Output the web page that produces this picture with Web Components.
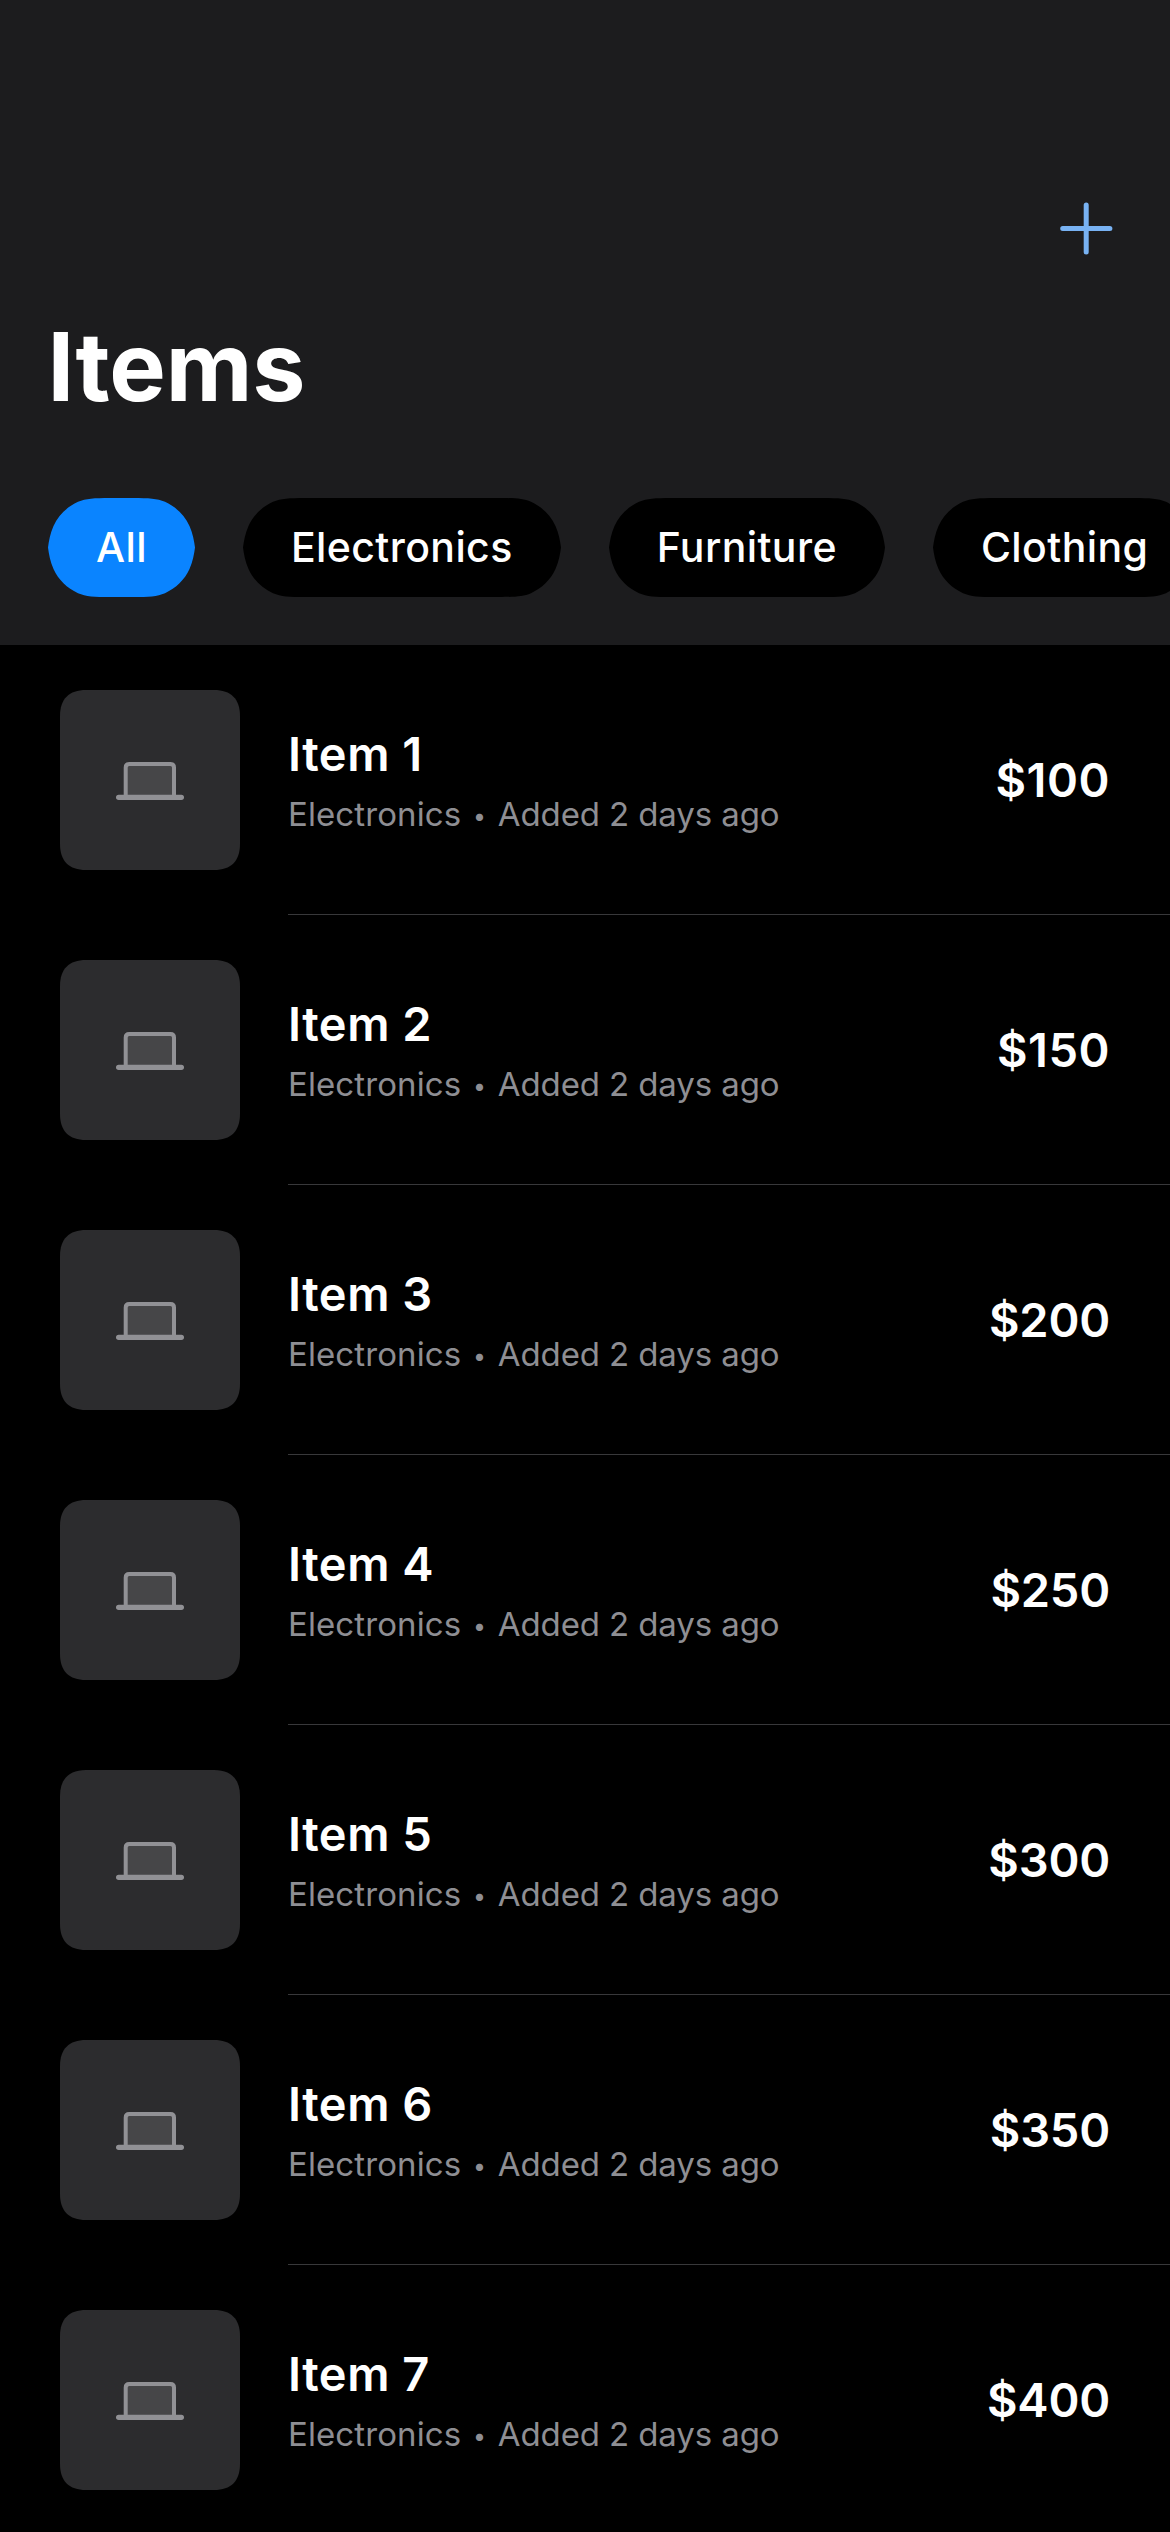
<!DOCTYPE html>
<html lang="en">
<head>
<meta charset="utf-8">
<title>Items</title>
<style>
html, body { margin: 0; background: #000; overflow: hidden; }
body { width: 1170px; height: 2532px; font-family: Inter, "Liberation Sans", sans-serif; color: #fff; }
</style>
</head>
<body>
<items-screen></items-screen>

<template id="screen">
<style>
:host { display: flex; flex-direction: column; width: 1170px; height: 2532px; overflow: hidden; background: #000; }
</style>
<nav-header heading="Items">
  <filter-chip selected>All</filter-chip>
  <filter-chip>Electronics</filter-chip>
  <filter-chip>Furniture</filter-chip>
  <filter-chip>Clothing</filter-chip>
</nav-header>
<main></main>
</template>

<template id="header">
<style>
:host { display: flex; flex-direction: column; box-sizing: border-box; height: 645px; padding: 202px 0 48px; background: #1c1c1e; flex: none; }
.bar { display: flex; justify-content: flex-end; padding-right: 57px; height: 53px; flex: none; }
svg { display: block; }
h1 { margin: 54px 0 0 47.5px; height: 116px; font-size: 95px; line-height: 116px; font-weight: 700; letter-spacing: -0.1px; }
.chips { display: flex; gap: 48px; padding-left: 48px; margin-top: auto; overflow: hidden; }
</style>
<div class="bar">
  <svg width="53" height="53" viewBox="0 0 53 53" fill="none" stroke="#78b2f3" stroke-width="5" stroke-linecap="round"><path d="M26.2 3v47M2.7 26.5h47.2"/></svg>
</div>
<h1></h1>
<div class="chips"><slot></slot></div>
</template>

<template id="chip">
<style>
:host { display: grid; flex: none; height: 99px; color: #000; font-size: 41px; font-weight: 500; letter-spacing: .4px; }
:host([selected]) { color: #0a84ff; }
.shape, .label { grid-area: 1 / 1; }
.shape { display: flex; min-width: 0; }
.shape svg { display: block; flex: none; fill: currentColor; }
.shape i { flex: 1; margin: 0 -1px; background: currentColor; }
.label { color: #fff; padding: 0 48px; line-height: 99px; white-space: nowrap; }
</style>
<div class="shape">
  <svg width="62" height="99" viewBox="0 0 62 99"><path d="M0 49.5C.8 43 2.300 35 5.500 28C10.500 17 19 9 30 3.800C38 .5 46 0 62 0V99C46 99 38 98.500 30 95.200C19 90 10.500 82 5.500 71C2.300 64 .8 56 0 49.500Z"/></svg>
  <i></i>
  <svg width="62" height="99" viewBox="0 0 62 99"><path transform="matrix(-1 0 0 1 62 0)" d="M0 49.5C.8 43 2.300 35 5.500 28C10.500 17 19 9 30 3.800C38 .5 46 0 62 0V99C46 99 38 98.500 30 95.200C19 90 10.500 82 5.500 71C2.300 64 .8 56 0 49.500Z"/></svg>
</div>
<div class="label"><slot></slot></div>
</template>

<template id="row">
<style>
:host { display: flex; align-items: stretch; height: 270px; padding-left: 60px; gap: 48px; }
.thumb { align-self: center; display: grid; place-items: center; width: 180px; height: 180px; flex: none; }
.thumb > svg { display: block; grid-area: 1 / 1; }
.thumb > .laptop { margin-top: 2px; }
.content { flex: 1; display: flex; align-items: center; justify-content: space-between; box-sizing: border-box; border-bottom: 1px solid #38383a; padding-right: 60px; }
.text { display: flex; flex-direction: column; gap: 8px; padding-top: 4px; }
.title { font-size: 47px; font-weight: 600; line-height: 57px; letter-spacing: .5px; }
.sub { display: flex; height: 48px; font-size: 33px; line-height: 48px; color: #8e8e93; white-space: pre; }
.cat { letter-spacing: .1px; }
.added { letter-spacing: -.1px; }
.dot { font-size: 23px; width: 36.500px; text-align: center; line-height: 52px; }
.price { font-size: 47px; font-weight: 600; line-height: 57px; letter-spacing: -.2px; }
:host([price^="$1"]) .price { letter-spacing: .5px; }
</style>
<div class="thumb">
  <svg width="180" height="180" viewBox="0 0 180 180"><path fill="#2c2c2e" d="M26 0H154C171 0 180 9 180 26V154C180 171 171 180 154 180H26C9 180 0 171 0 154V26C0 9 9 0 26 0Z"/></svg>
  <svg class="laptop" width="68" height="38" viewBox="0 0 68 38"><path d="M9.700 34V5.500Q9.700 2 13.200 2H54.500Q58 2 58 5.500V34" fill="#464648" stroke="#919195" stroke-width="4"/><rect y="32.700" width="68" height="5.300" rx="2.650" fill="#919195"/></svg>
</div>
<div class="content">
  <div class="text"><div class="title"></div><div class="sub"><span class="cat"></span><span class="dot"> • </span><span class="added"></span></div></div>
  <div class="price"></div>
</div>
</template>

<script>
class TemplateElement extends HTMLElement {
  constructor() {
    super();
    this.attachShadow({ mode: 'open' }).append(document.getElementById(this.constructor.template).content.cloneNode(true));
  }
  fill(selector, text) { this.shadowRoot.querySelector(selector).textContent = text; }
}
class FilterChip extends TemplateElement { static template = 'chip'; }
class NavHeader extends TemplateElement {
  static template = 'header';
  connectedCallback() { this.fill('h1', this.getAttribute('heading')); }
}
class ItemRow extends TemplateElement {
  static template = 'row';
  connectedCallback() {
    this.fill('.title', this.getAttribute('name'));
    this.fill('.cat', this.getAttribute('category'));
    this.fill('.added', this.getAttribute('added'));
    this.fill('.price', this.getAttribute('price'));
  }
}
class ItemsScreen extends TemplateElement {
  static template = 'screen';
  connectedCallback() {
    const list = this.shadowRoot.querySelector('main');
    [100, 150, 200, 250, 300, 350, 400].forEach((price, i) => {
      const row = document.createElement('item-row');
      row.setAttribute('name', `Item ${i + 1}`);
      row.setAttribute('category', 'Electronics');
      row.setAttribute('added', 'Added 2 days ago');
      row.setAttribute('price', `$${price}`);
      list.append(row);
    });
  }
}
customElements.define('filter-chip', FilterChip);
customElements.define('nav-header', NavHeader);
customElements.define('item-row', ItemRow);
customElements.define('items-screen', ItemsScreen);
</script>
</body>
</html>
